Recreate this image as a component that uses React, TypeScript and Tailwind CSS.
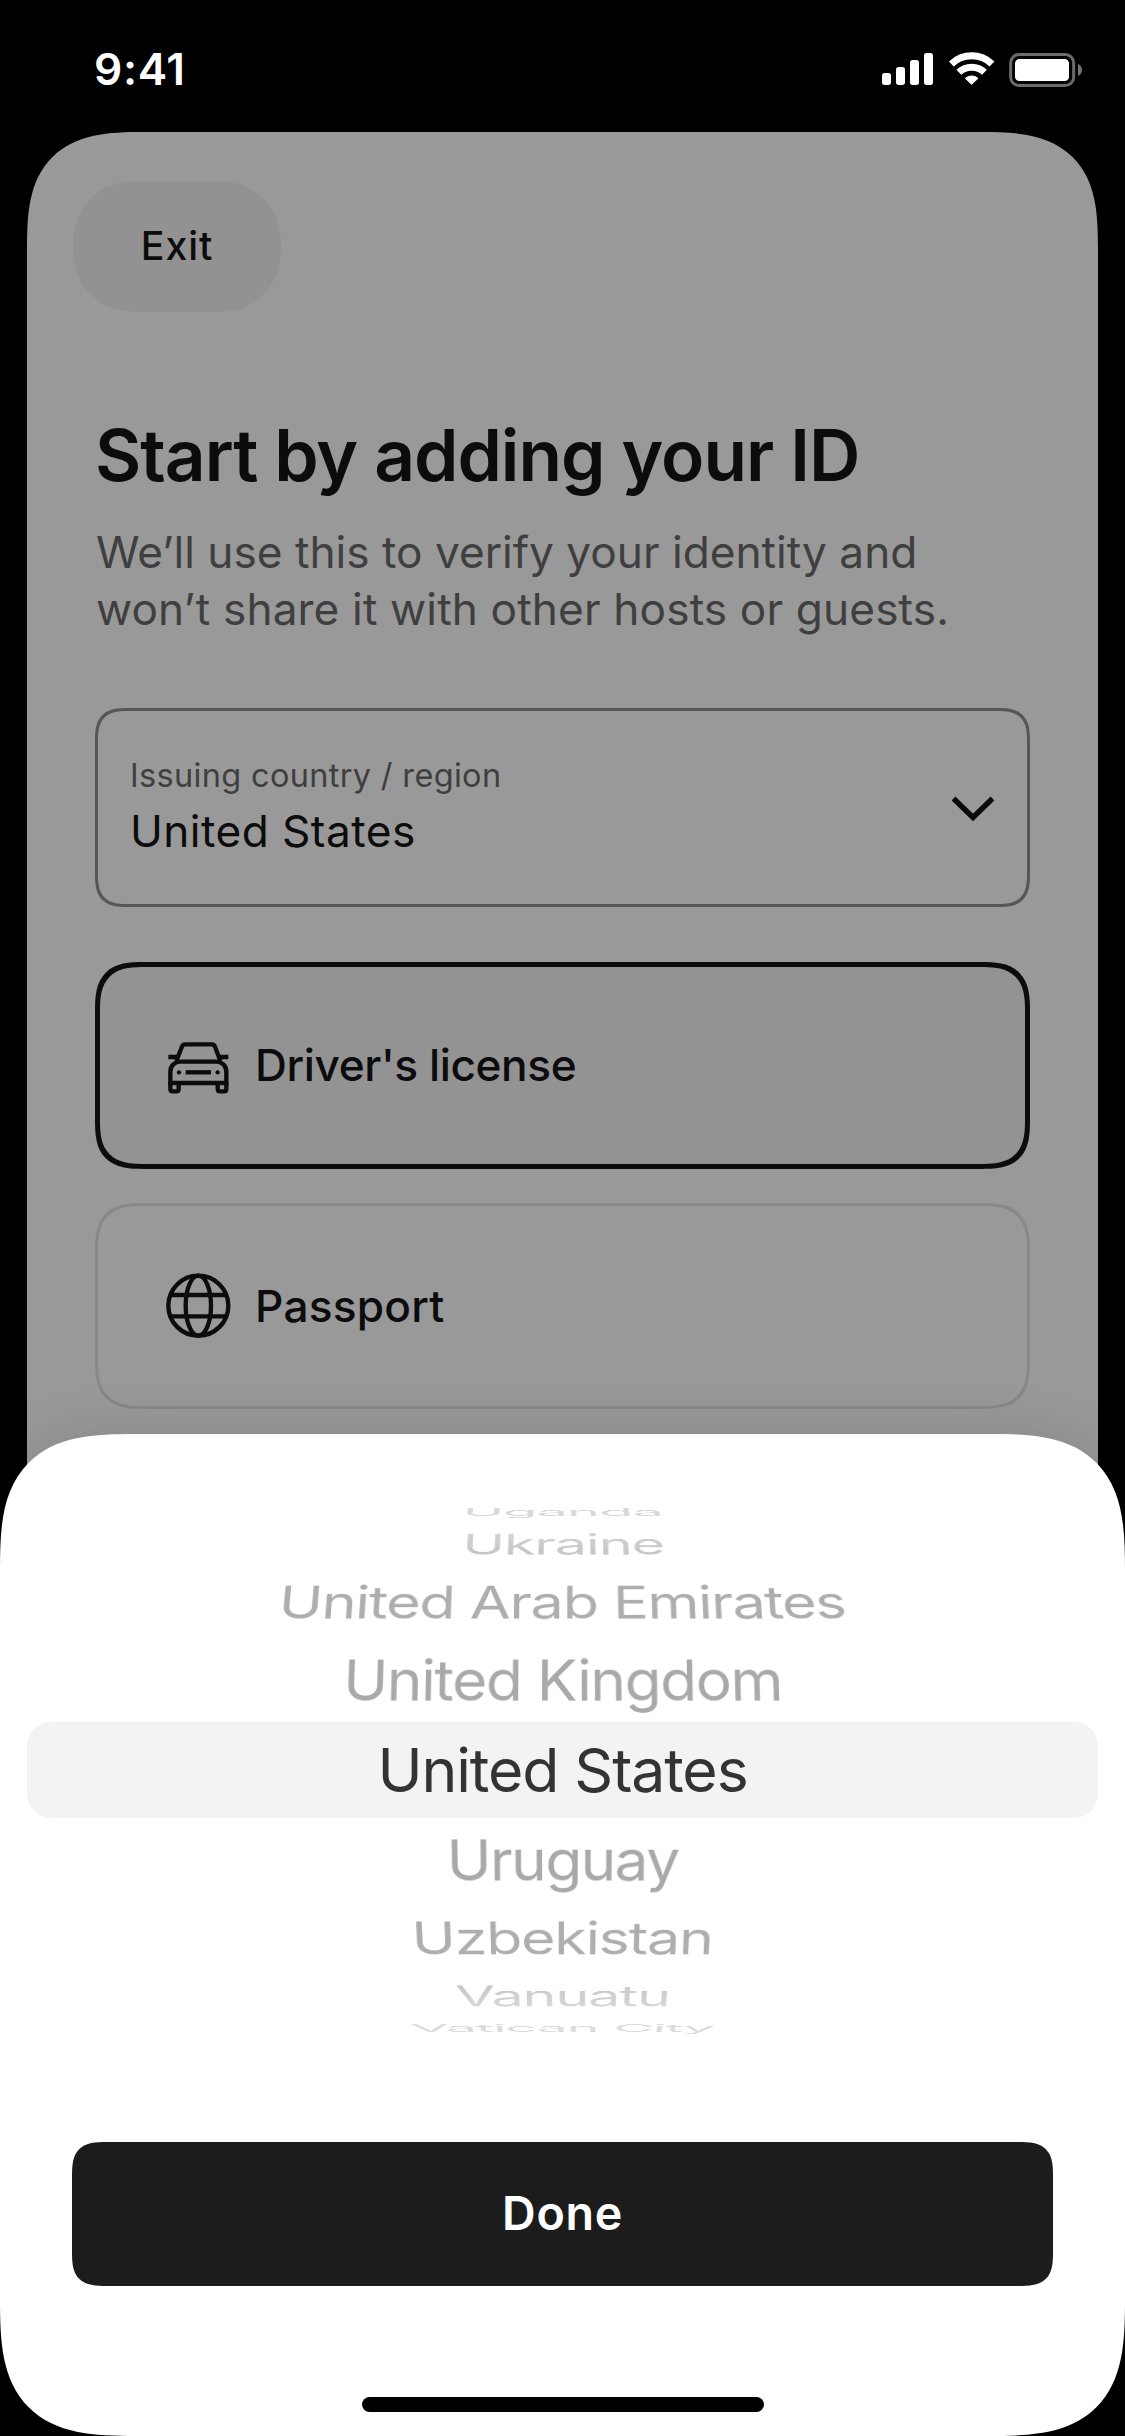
import clsx from "clsx";
import type { ReactNode } from "react";

const countries = [
	{
		name: "Uganda",
		row: "h-[20px]",
		label:
			"text-[#d8d8d8] tracking-[-0.018em] [transform:perspective(2500px)_translateZ(-212px)_rotateX(79deg)]",
	},
	{
		name: "Ukraine",
		row: "h-[44px]",
		label:
			"bg-linear-to-b from-[#d8d8d8] to-[#c0c0c0] bg-clip-text text-transparent tracking-[-0.022em] [transform:perspective(2500px)_translateZ(-131px)_rotateX(60deg)]",
	},
	{
		name: "United Arab Emirates",
		row: "h-[72px]",
		label:
			"text-[#adaead] tracking-[-0.021em] [transform:perspective(2500px)_translateZ(-62px)_rotateX(40deg)]",
	},
	{
		name: "United Kingdom",
		row: "h-[84px]",
		label:
			"text-[#a8a9a8] tracking-[-0.023em] [transform:perspective(2500px)_translateZ(-16px)_rotateX(20deg)]",
	},
	{
		name: "United States",
		row: "mx-[27px] h-[96px] rounded-[24px] bg-[#f3f3f3]",
		label: "text-[#333333] tracking-[-0.018em]",
	},
	{
		name: "Uruguay",
		row: "h-[84px]",
		label:
			"text-[#a8a9a8] tracking-[-0.026em] [transform:perspective(2500px)_translateZ(-16px)_rotateX(-20deg)]",
	},
	{
		name: "Uzbekistan",
		row: "h-[72px]",
		label:
			"text-[#adaead] tracking-[-0.021em] [transform:perspective(2500px)_translateZ(-62px)_rotateX(-40deg)]",
	},
	{
		name: "Vanuatu",
		row: "h-[44px]",
		label:
			"bg-linear-to-b from-[#c2c2c2] to-[#dcdcdc] bg-clip-text text-transparent tracking-[-0.021em] [transform:perspective(2500px)_translateZ(-131px)_rotateX(-60deg)]",
	},
	{
		name: "Vatican City",
		row: "h-[20px]",
		label:
			"text-[#dcdcdc] tracking-[-0.021em] [transform:perspective(2500px)_translateZ(-212px)_rotateX(-79deg)]",
	},
];

const StatusBar = () => {
	return (
		<div className="flex h-[132px] shrink-0 items-start justify-between pl-[94px] pr-[42px] text-white">
			<span className="mt-[39px] text-[44.2px] leading-[60px] font-semibold tracking-[0.015em]">
				9:41
			</span>
			<div className="mt-[51px] flex gap-[14.5px]">
				<svg className="h-[37px] w-[51px]" viewBox="126 63 153 111" fill="currentColor">
					<rect x="126" y="129" width="27" height="36" rx="8" />
					<rect x="168" y="111" width="27" height="54" rx="8" />
					<rect x="210" y="90" width="27" height="75" rx="8" />
					<rect x="252" y="69" width="27" height="96" rx="8" />
				</svg>
				<svg className="h-[37px] w-[47px]" viewBox="322 63 141 111" fill="none">
					<path
						d="M332 102a88 88 0 0 1 122 0M354.500 127a55.500 55.500 0 0 1 77 0"
						stroke="currentColor"
						strokeWidth="21"
					/>
					<path
						d="M374 145a29 29 0 0 1 38 0l-19 18z"
						fill="currentColor"
						stroke="currentColor"
						strokeWidth="3"
						strokeLinejoin="round"
					/>
				</svg>
				<svg className="h-[37px] w-[74px]" viewBox="507 63 222 111" fill="none">
					<rect
						x="512"
						y="73.500"
						width="189"
						height="93"
						rx="25"
						stroke="#6b6b6b"
						strokeWidth="9"
					/>
					<rect x="525" y="87" width="162" height="66" rx="13" fill="currentColor" />
					<path d="M714 102c8 4 12 10 12 18s-4 14-12 18z" fill="#757575" />
				</svg>
			</div>
		</div>
	);
};

const CarIcon = () => {
	return (
		<svg className="mt-[4px] h-[75px] w-[90px] shrink-0" viewBox="0 0 270 225" fill="none">
			<g stroke="currentColor" strokeWidth="13">
				<path d="M64 93 81 50q2-7 9-7h81q7 0 9 7l16 43" />
				<path d="M40 81h27M194 81h26" />
				<path d="M46 159v-34q0-14 9-22 9-8 20-8h110q11 0 20 8 9 8 9 22v34z" />
				<path d="M46 157v20q0 7 7 7h11q7 0 7-7v-20M188 157v20q0 7 7 7h12q7 0 7-7v-20" />
				<path d="M92 127h76" />
			</g>
			<circle cx="72" cy="127" r="6.500" fill="currentColor" />
			<circle cx="188" cy="127" r="6.500" fill="currentColor" />
		</svg>
	);
};

const GlobeIcon = () => {
	return (
		<svg className="mb-[3px] h-[85px] w-[90px] shrink-0" viewBox="0 0 270 255" fill="none">
			<g stroke="currentColor" strokeWidth="13">
				<circle cx="130" cy="131" r="90" />
				<ellipse cx="130" cy="131" rx="38" ry="90" />
				<path d="M46 99h168M46 163h168" />
			</g>
		</svg>
	);
};

type OptionProps = {
	icon: ReactNode;
	label: string;
	selected?: boolean;
};

const IdOption = ({ icon, label, selected }: OptionProps) => {
	return (
		<button
			className={clsx(
				"flex w-full items-center gap-[10px] rounded-[49px] text-[44.2px] font-medium [corner-shape:superellipse(1.5)]",
				selected
					? "h-[207px] border-[5px] border-[#0c0c0c] bg-[#939393] pl-[55px] tracking-[-0.009em]"
					: "h-[206px] border-[3px] border-[#888888] pl-[57px] tracking-[0.005em]",
			)}
		>
			{icon}
			<span>{label}</span>
		</button>
	);
};

const CountryPicker = () => {
	return (
		<div className="flex flex-col">
			{countries.map(({ name, row, label }) => (
				<div key={name} className={clsx("flex items-center justify-center", row)}>
					<span
						className={clsx(
							"shrink-0 text-[60.7px] leading-[74px] whitespace-nowrap",
							label,
						)}
					>
						{name}
					</span>
				</div>
			))}
		</div>
	);
};

const App = () => {
	return (
		<div className="relative flex h-[2436px] w-[1125px] flex-col overflow-hidden bg-black font-['Inter','Liberation_Sans',sans-serif] text-[#0c0c0c]">
			<StatusBar />

			<main className="mx-[27px] h-[1500px] shrink-0 rounded-t-[116px] bg-[#999999] [corner-shape:superellipse(1.5)]">
				<header className="flex px-[46px] pt-[49px]">
					<button className="h-[131px] w-[208px] rounded-[65px] bg-[#929292] text-[39.3px] font-medium tracking-[0.022em] [corner-shape:superellipse(1.15)]">
						Exit
					</button>
				</header>

				<div className="px-[68px]">
					<h1 className="mt-[101px] text-[71.2px] leading-[84px] font-semibold tracking-[-0.0141em] whitespace-nowrap">
						Start by adding your ID
					</h1>
					<p className="mt-[27px] pl-px text-[44.2px] leading-[57px] whitespace-nowrap text-[#3f3f3f]">
						We’ll use this to verify your identity and
						<br />
						<span className="tracking-[0.003em]">
							won’t share it with other hosts or guests.
						</span>
					</p>

					<button className="mt-[70px] flex h-[199px] w-full items-center justify-between rounded-[33px] border-[3px] border-[#565656] pr-[32px] pl-[32px] text-left [corner-shape:superellipse(1.5)]">
						<span className="flex flex-col gap-[7px]">
							<span className="text-[32.5px] leading-[40px] tracking-[0.01em] text-[#3f3f3f]">
								Issuing country / region
							</span>
							<span className="text-[44.2px] leading-[56px] tracking-[0.01em]">
								United States
							</span>
						</span>
						<svg className="mt-[3px] h-[26px] w-[44px]" viewBox="0 0 44 26" fill="none">
							<path d="M2.500 2.500 22 21.500 41.500 2.500" stroke="currentColor" strokeWidth="5.500" />
						</svg>
					</button>

					<div className="mt-[55px] flex flex-col gap-[34px]">
						<IdOption icon={<CarIcon />} label="Driver's license" selected />
						<IdOption icon={<GlobeIcon />} label="Passport" />
					</div>
				</div>
			</main>

			<section className="absolute inset-x-0 bottom-0 flex h-[1002px] flex-col rounded-[136px] bg-white pt-[68px] shadow-[0_0_60px_rgba(0,0,0,0.12)] [corner-shape:superellipse(1.55)]">
				<CountryPicker />
				<button className="mx-[72px] mt-[104px] h-[144px] rounded-[35px] bg-[#1c1c1c] text-[46.6px] font-semibold tracking-[0.015em] text-white [corner-shape:superellipse(1.6)]">
					Done
				</button>
				<div className="mx-auto mt-[111px] h-[15px] w-[402px] rounded-full bg-black" />
			</section>
		</div>
	);
};

export default App;
